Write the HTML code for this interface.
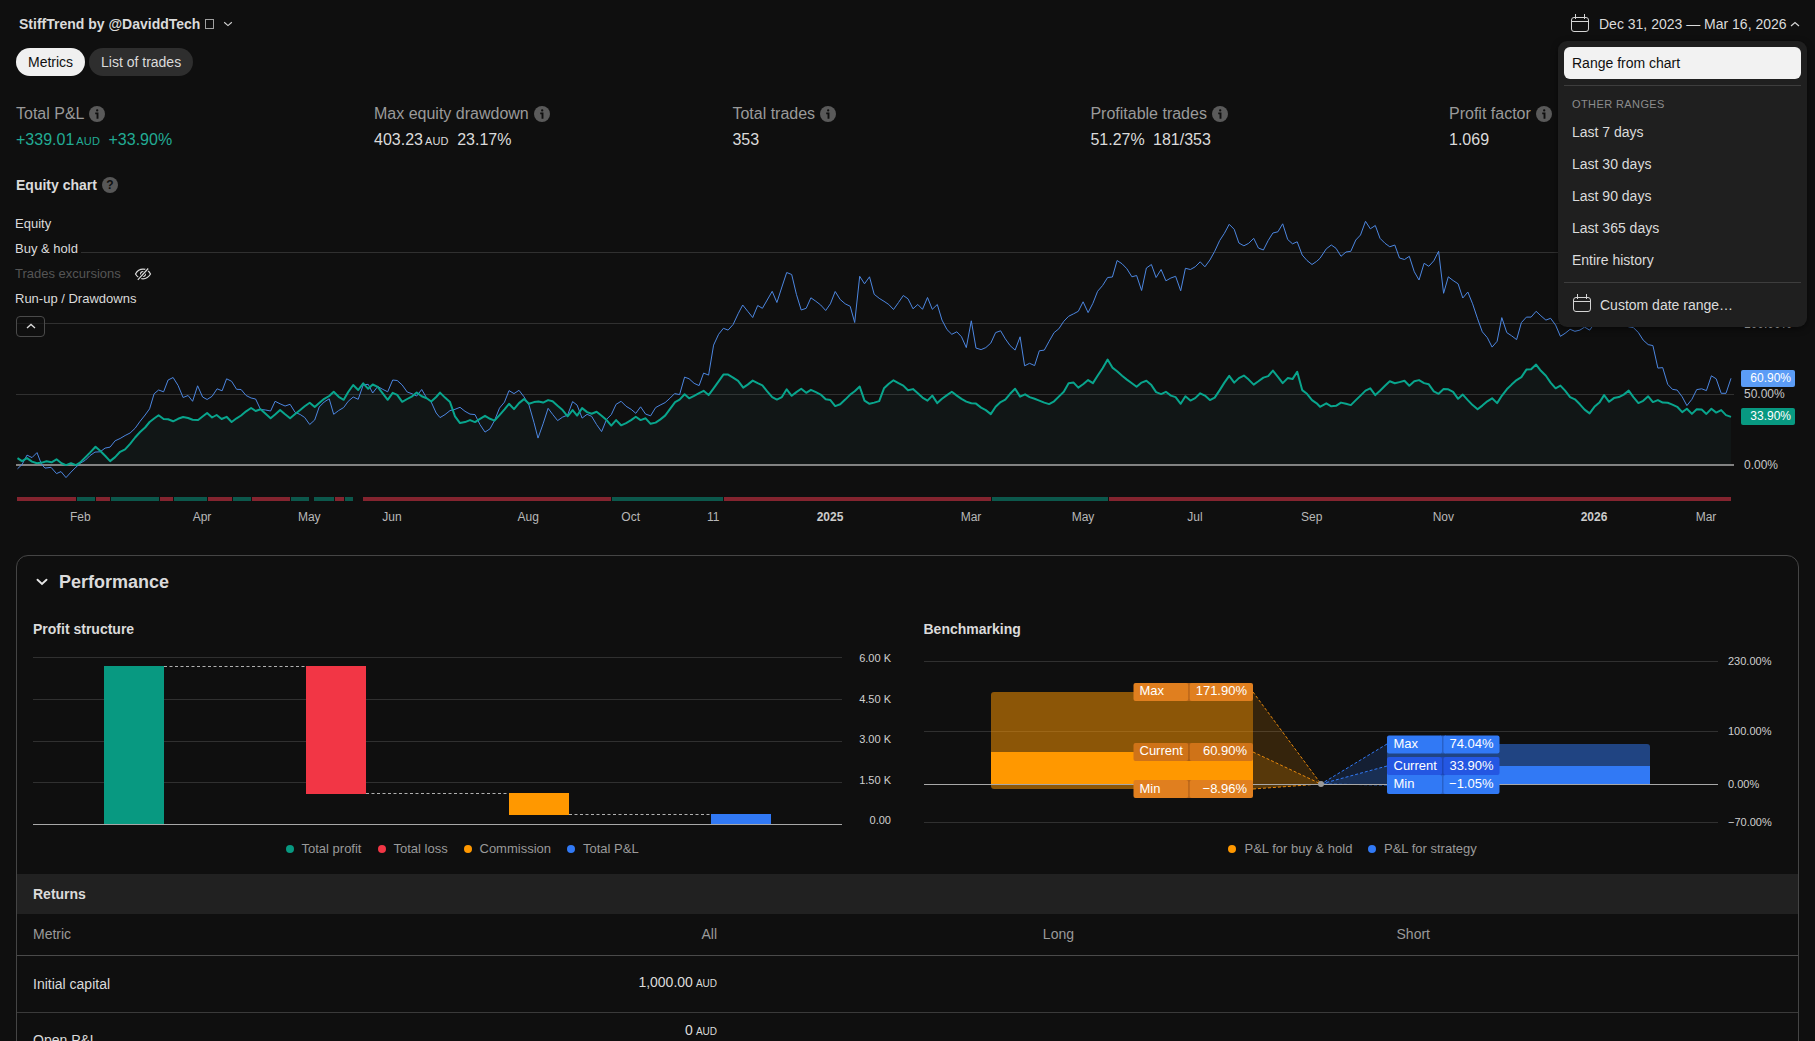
<!DOCTYPE html>
<html lang="en">
<head>
<meta charset="utf-8">
<title>Strategy report</title>
<style>
*{box-sizing:border-box;margin:0;padding:0}
html,body{width:1815px;height:1041px;overflow:hidden;background:#0f0f0f;color:#dbdbdb;font-family:"Liberation Sans",Arial,sans-serif;-webkit-font-smoothing:antialiased}
.abs{position:absolute}
#root{position:relative;width:1815px;height:1041px;overflow:hidden}
.title{left:19px;top:15px;font-size:14px;font-weight:700;color:#dbdbdb;line-height:18px;white-space:nowrap}
.tofu{display:inline-block;width:8.500px;height:10px;border:1px solid #a0a0a0;margin-left:4.900px;vertical-align:0}
.tab{top:48px;height:28px;border-radius:14px;font-size:14px;line-height:28px;padding:0 12px;white-space:nowrap}
.tab.on{left:16px;background:#f0f0f0;color:#0f0f0f}
.tab.off{left:89px;background:#2e2e2e;color:#dbdbdb}
.m{top:104px;white-space:nowrap}
.m .l{font-size:16px;line-height:20px;color:#9a9a9a;height:20px;display:flex;align-items:center}
.m .v{font-size:16px;line-height:20px;color:#dbdbdb;margin-top:6px}
.m .v small{font-size:11px;margin-left:2px;letter-spacing:.2px}
.m .v .g{margin-left:8.400px}
.green{color:#22ab94 !important}
.ic{display:block;width:16px;height:16px;margin-left:5px;flex:none}
.sect{font-size:14px;font-weight:700;color:#dbdbdb}
.lg{left:11px;font-size:13px;line-height:19px;padding:0 3.500px 0 4px;background:#0f0f0f;color:#dbdbdb;white-space:nowrap}
.dd{left:1558px;top:41px;width:249px;height:286px;background:#1f1f1f;border-radius:9px;box-shadow:0 2px 6px rgba(0,0,0,.5)}
.dd .sel{left:6px;top:6px;width:237px;height:32px;border-radius:6px;background:#f2f2f2;color:#0f0f0f;font-size:14px;line-height:32px;padding-left:8px}
.dd .sep{left:6px;width:237px;height:1px;background:#3d3d3d}
.dd .hd{left:14px;top:57px;font-size:11px;letter-spacing:.400px;color:#8c8c8c;line-height:13px}
.dd .it{left:14px;font-size:14px;line-height:18px;color:#dbdbdb;white-space:nowrap}
.panel{left:16px;top:555px;width:1783px;height:520px;border:1px solid #454545;border-radius:12px}
.ret{left:17px;top:874px;width:1781px;height:40px;background:#212121}
.hl{height:1px;background:#3a3a3a;left:17px;width:1781px}
.t14{font-size:14px;line-height:18px;white-space:nowrap}
svg text{font-family:"Liberation Sans",Arial,sans-serif}
</style>
</head>
<body>
<div id="root">

<!-- header -->
<div class="abs title">StiffTrend by @DaviddTech<span class="tofu"></span>
<svg width="10" height="6" viewBox="0 0 10 6" style="margin-left:5.200px;vertical-align:2px"><path d="M1.200 1.300l3.800 3.300l3.800-3.300" fill="none" stroke="#d4d4d4" stroke-width="1.150"/></svg></div>

<div class="abs tab on">Metrics</div>
<div class="abs tab off">List of trades</div>

<!-- header date -->
<svg class="abs" style="left:1570px;top:13px" width="20" height="20" viewBox="0 0 20 20"><rect x="1.500" y="4.500" width="17" height="14" rx="2.500" fill="none" stroke="#d4d4d4" stroke-width="1"/><path d="M1.500 8.500h17M5.500 1v5M14.500 1v5" stroke="#d4d4d4" stroke-width="1" fill="none"/></svg>
<div class="abs t14" style="left:1599px;top:15px;color:#dbdbdb">Dec 31, 2023 — Mar 16, 2026</div>
<svg class="abs" style="left:1790px;top:21px" width="10" height="6" viewBox="0 0 10 6"><path d="M1 5l4-3.500L9 5" fill="none" stroke="#d4d4d4" stroke-width="1.200"/></svg>

<!-- metrics -->
<div class="abs m" style="left:16px"><div class="l">Total P&amp;L<svg class="ic" viewBox="0 0 16 16"><circle cx="8" cy="8" r="8" fill="#5a5a5a"/><circle cx="8.200" cy="4.400" r="1.150" fill="#0f0f0f"/><path d="M6.200 7.400H8.500V12.800" fill="none" stroke="#0f0f0f" stroke-width="1.900"/></svg></div><div class="v green">+339.01<small>AUD</small><span class="g">+33.90%</span></div></div>
<div class="abs m" style="left:374px"><div class="l">Max equity drawdown<svg class="ic" viewBox="0 0 16 16"><circle cx="8" cy="8" r="8" fill="#5a5a5a"/><circle cx="8.200" cy="4.400" r="1.150" fill="#0f0f0f"/><path d="M6.200 7.400H8.500V12.800" fill="none" stroke="#0f0f0f" stroke-width="1.900"/></svg></div><div class="v">403.23<small>AUD</small><span class="g">23.17%</span></div></div>
<div class="abs m" style="left:732.400px"><div class="l">Total trades<svg class="ic" viewBox="0 0 16 16"><circle cx="8" cy="8" r="8" fill="#5a5a5a"/><circle cx="8.200" cy="4.400" r="1.150" fill="#0f0f0f"/><path d="M6.200 7.400H8.500V12.800" fill="none" stroke="#0f0f0f" stroke-width="1.900"/></svg></div><div class="v">353</div></div>
<div class="abs m" style="left:1090.400px"><div class="l">Profitable trades<svg class="ic" viewBox="0 0 16 16"><circle cx="8" cy="8" r="8" fill="#5a5a5a"/><circle cx="8.200" cy="4.400" r="1.150" fill="#0f0f0f"/><path d="M6.200 7.400H8.500V12.800" fill="none" stroke="#0f0f0f" stroke-width="1.900"/></svg></div><div class="v">51.27%<span class="g">181/353</span></div></div>
<div class="abs m" style="left:1449px"><div class="l">Profit factor<svg class="ic" viewBox="0 0 16 16"><circle cx="8" cy="8" r="8" fill="#5a5a5a"/><circle cx="8.200" cy="4.400" r="1.150" fill="#0f0f0f"/><path d="M6.200 7.400H8.500V12.800" fill="none" stroke="#0f0f0f" stroke-width="1.900"/></svg></div><div class="v">1.069</div></div>

<div class="abs sect" style="left:16px;top:176px;line-height:18px">Equity chart</div>
<div class="abs" style="left:102px;top:177px;width:16px;height:16px;border-radius:50%;background:#575757;color:#0f0f0f;font-size:12px;font-weight:700;line-height:16px;text-align:center">?</div>

<!-- equity chart -->
<svg class="abs" style="left:0;top:0" width="1815" height="545" viewBox="0 0 1815 545">
<g stroke="#303030" stroke-width="1">
<line x1="16" y1="252.5" x2="1734" y2="252.5"/>
<line x1="16" y1="323.5" x2="1734" y2="323.5"/>
<line x1="16" y1="394.5" x2="1734" y2="394.5"/>
</g>
<path d="M17.5,458.1 L22.0,461.1 L27.0,458.1 L32.0,461.6 L37.0,463.3 L42.0,462.6 L46.5,461.3 L51.5,462.3 L56.5,459.3 L61.5,463.3 L66.0,465.1 L71.0,463.3 L76.0,465.1 L80.0,462.6 L85.0,457.6 L90.0,452.6 L95.5,446.8 L100.1,450.8 L105.1,455.8 L110.1,461.1 L115.1,457.1 L120.1,451.8 L125.1,449.3 L130.1,443.8 L135.1,437.5 L140.1,432.0 L145.1,427.5 L149.6,422.0 L154.1,418.5 L158.6,415.3 L163.6,419.0 L168.1,419.3 L173.1,421.3 L178.1,418.8 L183.1,417.0 L188.1,418.0 L192.6,419.8 L198.1,420.0 L202.6,416.5 L207.1,413.0 L212.1,417.5 L216.6,415.0 L221.6,419.0 L226.6,416.8 L231.6,422.0 L236.6,418.3 L241.1,415.5 L246.1,411.3 L251.1,408.0 L255.6,411.0 L260.6,409.3 L265.6,413.8 L270.6,418.3 L275.1,414.5 L280.1,410.0 L285.1,414.3 L290.1,418.3 L295.1,414.0 L300.2,410.0 L304.7,406.3 L309.7,402.8 L314.7,407.0 L319.2,403.0 L324.2,398.8 L329.2,396.0 L333.7,391.8 L338.7,396.8 L343.7,399.8 L348.2,392.0 L353.2,385.0 L358.2,390.0 L363.2,383.3 L368.2,388.8 L372.7,384.5 L377.7,386.8 L382.7,393.3 L387.7,399.8 L392.7,392.8 L397.2,394.8 L402.2,401.8 L407.2,399.0 L412.2,396.3 L416.7,392.5 L421.7,396.3 L426.7,398.3 L431.2,401.5 L436.2,397.0 L440.0,392.6 L445.0,397.6 L450.0,402.1 L455.0,416.3 L460.0,423.1 L465.0,422.1 L470.0,420.1 L475.0,422.1 L480.0,418.8 L485.0,415.8 L490.0,418.8 L494.5,420.6 L499.5,415.1 L504.5,409.3 L509.0,403.8 L514.0,409.1 L519.0,403.1 L524.0,399.1 L529.0,403.8 L534.0,402.1 L538.5,401.6 L543.1,402.6 L548.1,400.1 L552.6,401.3 L557.6,405.8 L562.6,410.1 L567.6,416.3 L572.6,410.1 L577.1,415.6 L582.1,408.1 L587.1,412.1 L591.6,413.8 L596.6,411.8 L601.6,415.8 L606.6,420.1 L611.3,425.6 L616.1,420.1 L621.1,425.3 L626.1,423.1 L631.1,420.1 L635.8,416.8 L640.6,420.1 L645.6,418.3 L650.6,423.8 L655.6,422.6 L660.1,419.6 L665.1,415.6 L670.1,408.8 L675.1,402.1 L679.6,399.6 L684.6,394.3 L689.1,398.3 L694.1,395.8 L699.1,393.1 L703.6,390.8 L708.6,395.1 L713.6,388.3 L718.6,381.3 L723.4,374.6 L728.1,374.6 L733.1,377.6 L738.1,380.8 L743.2,387.6 L747.7,384.6 L752.7,380.6 L757.7,383.1 L762.4,385.3 L767.2,391.3 L772.2,397.1 L776.9,399.6 L781.9,397.1 L786.7,389.3 L791.7,395.8 L796.4,392.1 L801.2,388.8 L806.2,392.8 L810.9,389.8 L815.9,392.1 L820.7,394.6 L825.7,399.3 L830.4,400.1 L835.2,406.1 L840.2,404.3 L845.2,399.6 L850.2,394.6 L854.7,391.3 L859.7,386.6 L864.5,400.6 L869.5,403.8 L874.2,402.6 L879.2,401.1 L884.0,388.3 L888.8,383.8 L893.5,380.3 L898.5,383.1 L903.3,385.6 L908.0,390.3 L913.0,389.1 L917.8,393.3 L922.5,397.6 L927.5,400.6 L932.3,395.6 L937.3,403.1 L942.0,398.8 L947.0,395.1 L951.8,391.8 L956.8,395.6 L961.5,398.8 L966.3,401.6 L971.3,403.3 L976.0,403.6 L981.1,407.6 L985.8,410.1 L990.8,414.1 L995.6,406.8 L1000.6,402.1 L1005.3,399.6 L1010.1,393.8 L1015.1,388.8 L1020.1,396.6 L1025.1,394.3 L1029.6,397.1 L1034.6,398.8 L1039.3,400.6 L1044.3,402.6 L1049.1,404.1 L1054.1,401.3 L1058.8,396.6 L1063.8,391.8 L1068.6,383.3 L1073.6,382.6 L1078.3,387.6 L1083.1,384.3 L1088.1,380.1 L1092.9,383.1 L1097.6,375.8 L1102.6,368.3 L1107.6,359.6 L1112.4,367.6 L1117.1,371.3 L1122.1,375.8 L1126.9,379.6 L1131.9,383.3 L1136.6,386.8 L1141.6,382.6 L1146.4,380.8 L1151.4,385.1 L1156.1,392.1 L1161.1,394.1 L1165.9,391.8 L1170.9,395.6 L1175.6,397.1 L1180.7,403.8 L1185.4,396.3 L1190.4,400.6 L1195.2,398.1 L1200.2,393.3 L1204.9,395.6 L1209.9,400.1 L1214.7,397.6 L1219.7,390.1 L1224.4,382.6 L1229.2,375.8 L1234.2,382.6 L1238.9,378.1 L1243.9,375.6 L1248.7,379.6 L1253.7,384.6 L1258.4,381.3 L1263.4,377.6 L1268.2,376.1 L1272.9,370.6 L1277.9,376.8 L1282.7,383.1 L1287.7,378.1 L1292.5,379.1 L1297.2,371.8 L1302.2,390.1 L1307.0,393.8 L1312.0,400.1 L1316.7,403.3 L1320.0,406.8 L1326.3,403.3 L1331.3,406.3 L1336.0,405.8 L1341.0,402.6 L1346.0,403.8 L1350.8,405.1 L1355.8,400.1 L1360.5,395.6 L1365.5,390.6 L1370.3,388.3 L1375.3,395.1 L1380.0,390.8 L1385.0,385.8 L1389.8,381.3 L1394.8,383.3 L1399.5,382.1 L1404.5,380.8 L1409.3,385.8 L1414.3,381.3 L1419.0,380.1 L1424.1,383.1 L1428.8,384.3 L1433.8,391.3 L1438.6,393.8 L1443.6,389.1 L1448.3,389.3 L1453.1,391.8 L1458.1,398.8 L1462.8,394.6 L1467.8,400.1 L1472.6,405.1 L1477.6,409.3 L1482.3,405.6 L1487.3,401.3 L1492.1,398.3 L1497.1,403.1 L1501.8,395.8 L1506.8,389.3 L1511.6,384.6 L1516.6,380.1 L1521.4,377.1 L1526.4,369.6 L1531.1,369.3 L1536.1,364.6 L1540.9,370.8 L1545.9,375.8 L1550.6,382.6 L1555.6,388.3 L1560.4,385.6 L1565.1,390.6 L1570.1,397.1 L1574.9,399.3 L1579.9,404.3 L1584.6,409.6 L1589.6,413.4 L1594.4,406.8 L1599.4,402.6 L1604.1,395.1 L1609.1,401.8 L1613.9,398.1 L1618.9,397.1 L1623.7,394.6 L1628.7,390.6 L1633.4,397.1 L1638.4,403.1 L1643.2,400.8 L1648.2,396.3 L1652.9,402.1 L1657.9,400.1 L1662.7,402.6 L1667.7,402.8 L1672.4,404.6 L1677.2,406.8 L1682.2,412.1 L1686.9,408.8 L1691.9,413.9 L1696.7,409.3 L1701.7,409.6 L1706.4,413.9 L1711.4,408.8 L1716.2,412.6 L1721.2,410.1 L1726.0,415.1 L1731.0,416.9 L1731.0,465 L17.5,465 Z" fill="#38a0a0" fill-opacity="0.05"/>
<line x1="16" y1="465" x2="1734" y2="465" stroke="#a8a8a8" stroke-width="1.4"/>
<path d="M17.5,468.8 L22.0,464.6 L27.0,455.1 L32.0,457.6 L37.0,452.6 L41.5,464.3 L45.0,468.1 L51.0,467.3 L56.5,473.6 L61.0,471.6 L66.0,477.6 L71.0,472.1 L76.0,467.1 L80.5,463.1 L85.5,460.1 L90.0,455.6 L95.0,452.1 L100.1,451.8 L105.1,448.1 L110.1,447.1 L115.1,440.8 L120.1,438.5 L125.1,435.5 L130.1,433.0 L135.1,428.3 L140.1,421.3 L145.1,415.0 L149.6,408.8 L154.1,393.8 L158.6,390.0 L163.6,391.8 L168.1,380.0 L173.1,377.5 L178.1,385.5 L183.1,397.5 L188.1,395.5 L192.6,401.3 L197.6,385.8 L202.6,397.0 L207.1,399.5 L212.1,396.3 L217.1,388.8 L222.1,390.8 L226.6,378.8 L231.6,381.3 L236.6,389.3 L241.1,389.5 L246.1,395.5 L251.1,398.0 L255.6,399.0 L260.6,409.5 L265.6,410.0 L270.6,411.0 L275.1,401.3 L280.1,403.8 L285.1,406.0 L290.1,404.3 L295.1,412.3 L300.2,414.5 L304.7,417.5 L309.7,424.5 L314.7,420.0 L319.2,407.0 L324.2,402.0 L329.2,398.8 L333.7,414.3 L338.7,410.5 L343.7,407.5 L348.2,401.3 L353.2,397.0 L358.2,399.3 L363.2,385.0 L368.2,384.3 L372.7,393.0 L377.7,386.5 L382.7,389.3 L387.7,391.8 L392.7,380.0 L397.2,380.5 L402.2,385.0 L407.2,392.0 L412.2,393.8 L416.7,396.0 L421.7,389.5 L426.7,398.0 L431.2,402.0 L436.2,413.0 L440.0,417.6 L445.0,414.6 L450.0,410.6 L455.0,409.3 L460.0,407.3 L465.0,411.3 L470.0,414.1 L475.0,414.6 L480.0,424.6 L485.0,432.1 L490.0,428.8 L494.5,420.6 L499.5,408.1 L504.5,402.1 L509.0,390.6 L514.0,393.6 L519.0,390.3 L524.0,396.8 L529.0,405.1 L534.0,422.6 L538.0,438.1 L543.1,423.8 L548.1,408.3 L552.6,414.3 L557.6,420.6 L562.6,417.1 L567.6,415.1 L572.6,401.6 L577.1,405.1 L582.1,418.1 L587.1,414.3 L591.6,416.3 L596.6,424.6 L601.6,431.6 L606.6,419.3 L611.3,414.6 L616.1,404.3 L621.1,401.3 L626.1,406.3 L631.1,409.3 L635.8,413.3 L640.6,406.8 L645.6,414.1 L650.6,415.8 L655.6,407.6 L660.1,405.1 L665.1,402.6 L670.1,398.1 L674.6,393.6 L679.6,394.6 L684.6,377.1 L689.1,378.8 L694.1,383.3 L699.1,385.6 L703.6,373.1 L708.6,375.1 L713.6,345.1 L718.6,334.3 L723.4,328.3 L728.1,330.1 L733.1,324.5 L738.1,313.8 L742.7,305.0 L747.7,311.3 L752.7,317.5 L757.7,305.5 L762.4,308.3 L767.2,300.0 L772.2,291.3 L776.9,302.5 L781.9,287.0 L786.7,272.5 L791.7,274.5 L796.4,294.3 L801.2,310.0 L806.2,308.3 L810.9,297.8 L815.9,301.3 L820.7,305.0 L825.7,310.5 L830.4,303.8 L835.2,291.5 L840.2,299.5 L845.2,303.8 L850.2,306.3 L854.7,322.5 L859.7,276.3 L864.5,283.8 L869.5,276.8 L874.2,294.3 L879.2,298.3 L884.0,301.3 L888.8,304.5 L893.5,309.5 L898.5,302.5 L903.3,295.5 L908.0,298.8 L913.0,308.8 L917.8,304.5 L922.5,309.3 L927.5,297.5 L932.3,309.3 L937.3,304.5 L942.0,320.1 L947.0,329.6 L951.8,334.3 L956.8,331.8 L961.5,336.8 L966.3,347.6 L971.3,320.8 L976.0,348.1 L981.1,349.6 L985.8,347.6 L990.8,343.1 L995.6,332.6 L1000.6,330.8 L1005.3,338.8 L1010.1,345.6 L1015.1,350.1 L1020.1,336.8 L1024.6,365.8 L1029.6,363.3 L1034.6,365.6 L1039.3,350.8 L1044.3,350.1 L1049.1,341.3 L1054.1,332.6 L1058.8,328.8 L1063.8,321.3 L1068.6,316.3 L1073.6,313.8 L1078.3,311.3 L1083.1,301.8 L1088.1,312.6 L1092.9,303.3 L1097.6,291.3 L1102.6,285.5 L1107.6,277.5 L1112.4,277.0 L1117.1,260.5 L1122.1,263.8 L1126.9,268.8 L1131.9,276.8 L1136.6,275.5 L1141.6,290.5 L1146.4,268.0 L1151.4,264.5 L1156.1,277.5 L1161.1,269.5 L1165.9,280.8 L1170.9,278.0 L1175.6,276.3 L1180.7,290.8 L1185.4,268.3 L1190.4,269.5 L1195.2,266.8 L1200.2,261.8 L1204.9,266.8 L1209.9,260.0 L1214.7,251.3 L1219.7,240.5 L1224.4,233.3 L1229.2,224.3 L1234.2,229.3 L1238.9,243.0 L1243.9,245.8 L1248.7,243.3 L1253.7,238.3 L1258.4,248.0 L1263.4,250.0 L1268.2,240.5 L1272.9,233.0 L1277.9,231.8 L1282.7,223.8 L1287.7,239.5 L1292.5,243.8 L1297.2,241.8 L1302.2,255.0 L1307.0,260.5 L1312.0,264.5 L1316.7,261.3 L1320.0,258.3 L1326.3,248.8 L1331.3,245.0 L1336.0,248.3 L1341.0,256.3 L1346.0,252.0 L1350.8,251.3 L1355.8,240.0 L1360.5,235.0 L1365.5,221.3 L1370.3,228.8 L1375.3,225.5 L1380.0,238.3 L1385.0,243.3 L1389.8,246.8 L1394.8,245.0 L1399.5,258.0 L1404.5,259.5 L1409.3,256.3 L1414.3,271.8 L1419.0,280.0 L1424.1,263.3 L1428.8,266.3 L1433.8,260.8 L1438.6,251.3 L1443.6,293.3 L1448.3,276.8 L1453.1,280.5 L1458.1,283.8 L1462.8,298.0 L1467.8,292.0 L1472.6,303.8 L1477.6,318.8 L1482.3,331.8 L1487.3,337.6 L1492.1,347.1 L1497.1,341.3 L1501.8,317.6 L1506.8,332.6 L1511.6,335.8 L1516.6,339.6 L1521.4,322.6 L1526.4,317.1 L1531.1,317.1 L1536.1,311.3 L1540.9,315.8 L1545.9,320.1 L1550.6,318.3 L1555.6,325.1 L1560.4,336.3 L1565.1,333.3 L1570.1,329.3 L1574.9,331.3 L1579.9,330.1 L1584.6,327.1 L1589.6,330.1 L1594.4,323.8 L1599.4,320.1 L1604.1,321.3 L1609.1,320.1 L1613.9,322.6 L1618.9,320.1 L1623.7,323.8 L1628.7,326.8 L1633.4,327.6 L1638.4,332.6 L1643.2,340.1 L1648.2,344.6 L1652.9,345.6 L1657.9,368.1 L1662.7,367.6 L1667.7,384.3 L1672.4,389.3 L1677.2,390.1 L1682.2,396.8 L1686.9,405.6 L1691.9,399.3 L1696.7,389.6 L1701.7,388.8 L1706.4,390.6 L1711.4,375.8 L1716.2,378.8 L1721.2,393.3 L1726.0,393.3 L1731.0,378.3" fill="none" stroke="#4c86e0" stroke-width="1" stroke-linejoin="round"/>
<path d="M17.5,458.1 L22.0,461.1 L27.0,458.1 L32.0,461.6 L37.0,463.3 L42.0,462.6 L46.5,461.3 L51.5,462.3 L56.5,459.3 L61.5,463.3 L66.0,465.1 L71.0,463.3 L76.0,465.1 L80.0,462.6 L85.0,457.6 L90.0,452.6 L95.5,446.8 L100.1,450.8 L105.1,455.8 L110.1,461.1 L115.1,457.1 L120.1,451.8 L125.1,449.3 L130.1,443.8 L135.1,437.5 L140.1,432.0 L145.1,427.5 L149.6,422.0 L154.1,418.5 L158.6,415.3 L163.6,419.0 L168.1,419.3 L173.1,421.3 L178.1,418.8 L183.1,417.0 L188.1,418.0 L192.6,419.8 L198.1,420.0 L202.6,416.5 L207.1,413.0 L212.1,417.5 L216.6,415.0 L221.6,419.0 L226.6,416.8 L231.6,422.0 L236.6,418.3 L241.1,415.5 L246.1,411.3 L251.1,408.0 L255.6,411.0 L260.6,409.3 L265.6,413.8 L270.6,418.3 L275.1,414.5 L280.1,410.0 L285.1,414.3 L290.1,418.3 L295.1,414.0 L300.2,410.0 L304.7,406.3 L309.7,402.8 L314.7,407.0 L319.2,403.0 L324.2,398.8 L329.2,396.0 L333.7,391.8 L338.7,396.8 L343.7,399.8 L348.2,392.0 L353.2,385.0 L358.2,390.0 L363.2,383.3 L368.2,388.8 L372.7,384.5 L377.7,386.8 L382.7,393.3 L387.7,399.8 L392.7,392.8 L397.2,394.8 L402.2,401.8 L407.2,399.0 L412.2,396.3 L416.7,392.5 L421.7,396.3 L426.7,398.3 L431.2,401.5 L436.2,397.0 L440.0,392.6 L445.0,397.6 L450.0,402.1 L455.0,416.3 L460.0,423.1 L465.0,422.1 L470.0,420.1 L475.0,422.1 L480.0,418.8 L485.0,415.8 L490.0,418.8 L494.5,420.6 L499.5,415.1 L504.5,409.3 L509.0,403.8 L514.0,409.1 L519.0,403.1 L524.0,399.1 L529.0,403.8 L534.0,402.1 L538.5,401.6 L543.1,402.6 L548.1,400.1 L552.6,401.3 L557.6,405.8 L562.6,410.1 L567.6,416.3 L572.6,410.1 L577.1,415.6 L582.1,408.1 L587.1,412.1 L591.6,413.8 L596.6,411.8 L601.6,415.8 L606.6,420.1 L611.3,425.6 L616.1,420.1 L621.1,425.3 L626.1,423.1 L631.1,420.1 L635.8,416.8 L640.6,420.1 L645.6,418.3 L650.6,423.8 L655.6,422.6 L660.1,419.6 L665.1,415.6 L670.1,408.8 L675.1,402.1 L679.6,399.6 L684.6,394.3 L689.1,398.3 L694.1,395.8 L699.1,393.1 L703.6,390.8 L708.6,395.1 L713.6,388.3 L718.6,381.3 L723.4,374.6 L728.1,374.6 L733.1,377.6 L738.1,380.8 L743.2,387.6 L747.7,384.6 L752.7,380.6 L757.7,383.1 L762.4,385.3 L767.2,391.3 L772.2,397.1 L776.9,399.6 L781.9,397.1 L786.7,389.3 L791.7,395.8 L796.4,392.1 L801.2,388.8 L806.2,392.8 L810.9,389.8 L815.9,392.1 L820.7,394.6 L825.7,399.3 L830.4,400.1 L835.2,406.1 L840.2,404.3 L845.2,399.6 L850.2,394.6 L854.7,391.3 L859.7,386.6 L864.5,400.6 L869.5,403.8 L874.2,402.6 L879.2,401.1 L884.0,388.3 L888.8,383.8 L893.5,380.3 L898.5,383.1 L903.3,385.6 L908.0,390.3 L913.0,389.1 L917.8,393.3 L922.5,397.6 L927.5,400.6 L932.3,395.6 L937.3,403.1 L942.0,398.8 L947.0,395.1 L951.8,391.8 L956.8,395.6 L961.5,398.8 L966.3,401.6 L971.3,403.3 L976.0,403.6 L981.1,407.6 L985.8,410.1 L990.8,414.1 L995.6,406.8 L1000.6,402.1 L1005.3,399.6 L1010.1,393.8 L1015.1,388.8 L1020.1,396.6 L1025.1,394.3 L1029.6,397.1 L1034.6,398.8 L1039.3,400.6 L1044.3,402.6 L1049.1,404.1 L1054.1,401.3 L1058.8,396.6 L1063.8,391.8 L1068.6,383.3 L1073.6,382.6 L1078.3,387.6 L1083.1,384.3 L1088.1,380.1 L1092.9,383.1 L1097.6,375.8 L1102.6,368.3 L1107.6,359.6 L1112.4,367.6 L1117.1,371.3 L1122.1,375.8 L1126.9,379.6 L1131.9,383.3 L1136.6,386.8 L1141.6,382.6 L1146.4,380.8 L1151.4,385.1 L1156.1,392.1 L1161.1,394.1 L1165.9,391.8 L1170.9,395.6 L1175.6,397.1 L1180.7,403.8 L1185.4,396.3 L1190.4,400.6 L1195.2,398.1 L1200.2,393.3 L1204.9,395.6 L1209.9,400.1 L1214.7,397.6 L1219.7,390.1 L1224.4,382.6 L1229.2,375.8 L1234.2,382.6 L1238.9,378.1 L1243.9,375.6 L1248.7,379.6 L1253.7,384.6 L1258.4,381.3 L1263.4,377.6 L1268.2,376.1 L1272.9,370.6 L1277.9,376.8 L1282.7,383.1 L1287.7,378.1 L1292.5,379.1 L1297.2,371.8 L1302.2,390.1 L1307.0,393.8 L1312.0,400.1 L1316.7,403.3 L1320.0,406.8 L1326.3,403.3 L1331.3,406.3 L1336.0,405.8 L1341.0,402.6 L1346.0,403.8 L1350.8,405.1 L1355.8,400.1 L1360.5,395.6 L1365.5,390.6 L1370.3,388.3 L1375.3,395.1 L1380.0,390.8 L1385.0,385.8 L1389.8,381.3 L1394.8,383.3 L1399.5,382.1 L1404.5,380.8 L1409.3,385.8 L1414.3,381.3 L1419.0,380.1 L1424.1,383.1 L1428.8,384.3 L1433.8,391.3 L1438.6,393.8 L1443.6,389.1 L1448.3,389.3 L1453.1,391.8 L1458.1,398.8 L1462.8,394.6 L1467.8,400.1 L1472.6,405.1 L1477.6,409.3 L1482.3,405.6 L1487.3,401.3 L1492.1,398.3 L1497.1,403.1 L1501.8,395.8 L1506.8,389.3 L1511.6,384.6 L1516.6,380.1 L1521.4,377.1 L1526.4,369.6 L1531.1,369.3 L1536.1,364.6 L1540.9,370.8 L1545.9,375.8 L1550.6,382.6 L1555.6,388.3 L1560.4,385.6 L1565.1,390.6 L1570.1,397.1 L1574.9,399.3 L1579.9,404.3 L1584.6,409.6 L1589.6,413.4 L1594.4,406.8 L1599.4,402.6 L1604.1,395.1 L1609.1,401.8 L1613.9,398.1 L1618.9,397.1 L1623.7,394.6 L1628.7,390.6 L1633.4,397.1 L1638.4,403.1 L1643.2,400.8 L1648.2,396.3 L1652.9,402.1 L1657.9,400.1 L1662.7,402.6 L1667.7,402.8 L1672.4,404.6 L1677.2,406.8 L1682.2,412.1 L1686.9,408.8 L1691.9,413.9 L1696.7,409.3 L1701.7,409.6 L1706.4,413.9 L1711.4,408.8 L1716.2,412.6 L1721.2,410.1 L1726.0,415.1 L1731.0,416.9" fill="none" stroke="#09a58d" stroke-width="2" stroke-linejoin="round"/>
<rect x="17" y="497" width="59" height="4" fill="#84242f"/><rect x="77" y="497" width="18" height="4" fill="#0c584c"/><rect x="96" y="497" width="14" height="4" fill="#84242f"/><rect x="111" y="497" width="48" height="4" fill="#0c584c"/><rect x="160" y="497" width="13" height="4" fill="#84242f"/><rect x="174" y="497" width="33" height="4" fill="#0c584c"/><rect x="208" y="497" width="24" height="4" fill="#84242f"/><rect x="233" y="497" width="18" height="4" fill="#0c584c"/><rect x="252" y="497" width="38" height="4" fill="#84242f"/><rect x="291" y="497" width="18" height="4" fill="#0c584c"/><rect x="314" y="497" width="20" height="4" fill="#0c584c"/><rect x="335" y="497" width="9" height="4" fill="#84242f"/><rect x="345" y="497" width="8" height="4" fill="#0c584c"/><rect x="363" y="497" width="248" height="4" fill="#84242f"/><rect x="612" y="497" width="111" height="4" fill="#0c584c"/><rect x="724" y="497" width="267" height="4" fill="#84242f"/><rect x="992" y="497" width="116" height="4" fill="#0c584c"/><rect x="1109" y="497" width="622" height="4" fill="#84242f"/>
<text x="80.3" y="521" text-anchor="middle" font-size="12" fill="#b8b8b8" >Feb</text><text x="202" y="521" text-anchor="middle" font-size="12" fill="#b8b8b8" >Apr</text><text x="309.3" y="521" text-anchor="middle" font-size="12" fill="#b8b8b8" >May</text><text x="392" y="521" text-anchor="middle" font-size="12" fill="#b8b8b8" >Jun</text><text x="528.3" y="521" text-anchor="middle" font-size="12" fill="#b8b8b8" >Aug</text><text x="630.7" y="521" text-anchor="middle" font-size="12" fill="#b8b8b8" >Oct</text><text x="713.3" y="521" text-anchor="middle" font-size="12" fill="#b8b8b8" >11</text><text x="830" y="521" text-anchor="middle" font-size="12" fill="#cccccc" font-weight="700">2025</text><text x="971" y="521" text-anchor="middle" font-size="12" fill="#b8b8b8" >Mar</text><text x="1083" y="521" text-anchor="middle" font-size="12" fill="#b8b8b8" >May</text><text x="1195" y="521" text-anchor="middle" font-size="12" fill="#b8b8b8" >Jul</text><text x="1311.7" y="521" text-anchor="middle" font-size="12" fill="#b8b8b8" >Sep</text><text x="1443.3" y="521" text-anchor="middle" font-size="12" fill="#b8b8b8" >Nov</text><text x="1594" y="521" text-anchor="middle" font-size="12" fill="#cccccc" font-weight="700">2026</text><text x="1706" y="521" text-anchor="middle" font-size="12" fill="#b8b8b8" >Mar</text>
<g font-size="12" fill="#c8c8c8">
<text x="1744" y="327.800">100.00%</text>
<text x="1744" y="398">50.00%</text>
<text x="1744" y="469">0.00%</text>
</g>
<rect x="1741" y="370" width="54" height="17" rx="2" fill="#5b9cf6"/>
<text x="1791" y="382" font-size="12" fill="#fff" text-anchor="end">60.90%</text>
<rect x="1741" y="408" width="54" height="17" rx="2" fill="#089981"/>
<text x="1791" y="420" font-size="12" fill="#fff" text-anchor="end">33.90%</text>
</svg>

<!-- chart legend -->
<div class="abs lg" style="top:214px">Equity</div>
<div class="abs lg" style="top:239px">Buy &amp; hold</div>
<div class="abs lg" style="top:264px;color:#555;width:146px">Trades excursions</div>
<svg class="abs" style="left:134px;top:265px" width="18" height="18" viewBox="0 0 18 18"><path d="M1.5 9C3.3 5.8 6 4.2 9 4.2S14.700 5.800 16.500 9C14.700 12.200 12 13.800 9 13.800S3.300 12.200 1.500 9Z" fill="none" stroke="#dbdbdb" stroke-width="1.2"/><circle cx="9" cy="9" r="2.400" fill="none" stroke="#dbdbdb" stroke-width="1.2"/><path d="M3.800 14.800L14.200 3.500" stroke="#0f0f0f" stroke-width="3.200"/><path d="M3.800 14.800L14.200 3.500" stroke="#dbdbdb" stroke-width="1.200"/></svg>
<div class="abs lg" style="top:289px">Run-up / Drawdowns</div>

<div class="abs" style="left:16px;top:316px;width:29px;height:21px;border:1px solid #4a4a4a;border-radius:4px;background:rgba(15,15,15,.6)"></div>
<svg class="abs" style="left:25.600px;top:323.400px" width="10" height="6" viewBox="0 0 10 6"><path d="M1 5l4-3.600L9 5" fill="none" stroke="#dbdbdb" stroke-width="1.300"/></svg>

<!-- performance panel -->
<div class="abs panel"></div>
<svg class="abs" style="left:36px;top:578px" width="12" height="8" viewBox="0 0 12 8"><path d="M1.500 1.700L6 5.900l4.500-4.200" fill="none" stroke="#e6e6e6" stroke-width="1.900" stroke-linecap="round"/></svg>
<div class="abs" style="left:59px;top:571px;font-size:18px;font-weight:700;line-height:22px;color:#dbdbdb">Performance</div>
<div class="abs sect" style="left:33px;top:620px;line-height:18px">Profit structure</div>
<div class="abs sect" style="left:923.500px;top:620px;line-height:18px">Benchmarking</div>

<svg class="abs" style="left:0;top:640px" width="1815" height="225" viewBox="0 640 1815 225">
<!-- profit structure -->
<g stroke="#303030" stroke-width="1">
<line x1="33" y1="657.500" x2="842" y2="657.500"/>
<line x1="33" y1="699.500" x2="842" y2="699.500"/>
<line x1="33" y1="741.500" x2="842" y2="741.500"/>
<line x1="33" y1="782.500" x2="842" y2="782.500"/>
</g>
<line x1="33" y1="824.500" x2="842" y2="824.500" stroke="#a8a8a8" stroke-width="1.200"/>
<rect x="104" y="666" width="60" height="158" fill="#089981"/>
<rect x="306" y="666" width="60" height="128" fill="#f23645"/>
<rect x="509" y="793" width="60" height="22" fill="#ff9800"/>
<rect x="711" y="814" width="60" height="10" fill="#3179f5"/>
<g stroke="#b0b0b0" stroke-width="1" stroke-dasharray="3 2.500">
<line x1="164" y1="666.500" x2="306" y2="666.500"/>
<line x1="366" y1="793.500" x2="509" y2="793.500"/>
<line x1="569" y1="814.500" x2="711" y2="814.500"/>
</g>
<g font-size="11" fill="#d0d0d0" text-anchor="end">
<text x="891" y="662">6.00 K</text>
<text x="891" y="703">4.50 K</text>
<text x="891" y="743">3.00 K</text>
<text x="891" y="784">1.50 K</text>
<text x="891" y="824">0.00</text>
</g>
<g font-size="13" fill="#9a9a9a">
<circle cx="290" cy="849" r="4" fill="#089981"/><text x="301.500" y="853">Total profit</text>
<circle cx="382" cy="849" r="4" fill="#f23645"/><text x="393.500" y="853">Total loss</text>
<circle cx="468" cy="849" r="4" fill="#ff9800"/><text x="479.500" y="853">Commission</text>
<circle cx="571" cy="849" r="4" fill="#3179f5"/><text x="583" y="853">Total P&amp;L</text>
</g>

<!-- benchmarking -->
<g stroke="#303030" stroke-width="1">
<line x1="924" y1="661.500" x2="1718" y2="661.500"/>
<line x1="924" y1="731.500" x2="1718" y2="731.500"/>
<line x1="924" y1="822.500" x2="1718" y2="822.500"/>
</g>
<rect x="991" y="692" width="262" height="97" rx="3" fill="#ff9800" fill-opacity="0.520"/>
<rect x="991" y="752" width="262" height="32.500" fill="#ff9800"/>
<path d="M1253 692L1321 784L1253 752Z" fill="#ff9800" fill-opacity="0.160"/>
<path d="M1253 752L1321 784L1253 789Z" fill="#ff9800" fill-opacity="0.300"/>
<g stroke="#e8890c" stroke-width="1" stroke-dasharray="3 2" fill="none">
<path d="M1253 692L1321 784M1253 752L1321 784M1253 789L1321 784"/>
</g>
<path d="M1387 744L1321 784L1387 766Z" fill="#3179f5" fill-opacity="0.160"/>
<path d="M1387 766L1321 784L1387 785Z" fill="#3179f5" fill-opacity="0.300"/>
<g stroke="#3179f5" stroke-width="1" stroke-dasharray="3 2" fill="none">
<path d="M1387 744L1321 784M1387 766L1321 784M1387 785L1321 784"/>
</g>
<rect x="1387" y="744" width="263" height="40.500" rx="3" fill="#3179f5" fill-opacity="0.500"/>
<rect x="1387" y="766" width="263" height="18.500" fill="#3179f5"/>
<line x1="924" y1="784.500" x2="1718" y2="784.500" stroke="#a8a8a8" stroke-width="1.200"/>
<circle cx="1321" cy="784" r="3" fill="#9a9a9a"/>
<g font-size="13" fill="#fff">
<rect x="1186" y="683" width="6" height="18" fill="#b9661a"/><rect x="1133.500" y="683" width="54.700" height="18" rx="2" fill="#e07f1f"/><rect x="1189.700" y="683" width="63.300" height="18" rx="2" fill="#e07f1f"/>
<text x="1139.500" y="695">Max</text><text x="1247" y="695" text-anchor="end">171.90%</text>
<rect x="1186" y="743" width="6" height="18" fill="#a85c14"/><rect x="1133.500" y="743" width="54.700" height="18" rx="2" fill="#cf7318"/><rect x="1189.700" y="743" width="63.300" height="18" rx="2" fill="#cf7318"/>
<text x="1139.500" y="755">Current</text><text x="1247" y="755" text-anchor="end">60.90%</text>
<rect x="1186" y="780" width="6" height="18" fill="#b9661a"/><rect x="1133.500" y="780" width="54.700" height="18" rx="2" fill="#e07f1f"/><rect x="1189.700" y="780" width="63.300" height="18" rx="2" fill="#e07f1f"/>
<text x="1139.500" y="792.500">Min</text><text x="1247" y="792.500" text-anchor="end">−8.96%</text>

<rect x="1440" y="735.500" width="6" height="18" fill="#2861c8"/><rect x="1387" y="735.500" width="55" height="18" rx="2" fill="#3179f5"/><rect x="1443.500" y="735.500" width="56" height="18" rx="2" fill="#3179f5"/>
<text x="1393.500" y="747.500">Max</text><text x="1493.500" y="747.500" text-anchor="end">74.04%</text>
<rect x="1440" y="757" width="6" height="18" fill="#1d47b8"/><rect x="1387" y="757" width="55" height="18" rx="2" fill="#2457e2"/><rect x="1443.500" y="757" width="56" height="18" rx="2" fill="#2457e2"/>
<text x="1393.500" y="769.500">Current</text><text x="1493.500" y="769.500" text-anchor="end">33.90%</text>
<rect x="1440" y="775" width="6" height="19" fill="#2861c8"/><rect x="1387" y="775" width="55" height="19" rx="2" fill="#3179f5"/><rect x="1443.500" y="775" width="56" height="19" rx="2" fill="#3179f5"/>
<text x="1393.500" y="787.500">Min</text><text x="1493.500" y="787.500" text-anchor="end">−1.05%</text>
</g>
<g font-size="11" fill="#d0d0d0">
<text x="1728" y="665">230.00%</text>
<text x="1728" y="735">100.00%</text>
<text x="1728" y="788">0.00%</text>
<text x="1728" y="826">−70.00%</text>
</g>
<g font-size="13" fill="#9a9a9a">
<circle cx="1232" cy="849" r="4" fill="#ff9800"/><text x="1244.500" y="853">P&amp;L for buy &amp; hold</text>
<circle cx="1372" cy="849" r="4" fill="#3179f5"/><text x="1384" y="853">P&amp;L for strategy</text>
</g>
</svg>

<!-- returns table -->
<div class="abs ret"></div>
<div class="abs sect" style="left:33px;top:885px;line-height:18px">Returns</div>
<div class="abs t14" style="left:33px;top:925px;color:#9a9a9a">Metric</div>
<div class="abs t14" style="left:617px;top:925px;width:100px;text-align:right;color:#9a9a9a">All</div>
<div class="abs t14" style="left:974px;top:925px;width:100px;text-align:right;color:#9a9a9a">Long</div>
<div class="abs t14" style="left:1330px;top:925px;width:100px;text-align:right;color:#9a9a9a">Short</div>
<div class="abs hl" style="top:955px;background:#4a4a4a"></div>
<div class="abs t14" style="left:33px;top:975px;color:#dbdbdb">Initial capital</div>
<div class="abs t14" style="left:517px;top:973px;width:200px;text-align:right;color:#dbdbdb">1,000.00<span style="font-size:10px;margin-left:3px">AUD</span></div>
<div class="abs hl" style="top:1012px"></div>
<div class="abs t14" style="left:33px;top:1031px;color:#dbdbdb">Open P&amp;L</div>
<div class="abs t14" style="left:517px;top:1021px;width:200px;text-align:right;color:#dbdbdb">0<span style="font-size:10px;margin-left:3px">AUD</span></div>

<!-- dropdown -->
<div class="abs dd">
<div class="abs sel">Range from chart</div>
<div class="abs sep" style="top:44px"></div>
<div class="abs hd">OTHER RANGES</div>
<div class="abs it" style="top:82px">Last 7 days</div>
<div class="abs it" style="top:114px">Last 30 days</div>
<div class="abs it" style="top:146px">Last 90 days</div>
<div class="abs it" style="top:178px">Last 365 days</div>
<div class="abs it" style="top:210px">Entire history</div>
<div class="abs sep" style="top:241px"></div>
<svg class="abs" style="left:14px;top:252px" width="20" height="20" viewBox="0 0 20 20"><rect x="1.500" y="4.500" width="17" height="14" rx="2.500" fill="none" stroke="#d4d4d4" stroke-width="1"/><path d="M1.500 8.500h17M5.500 1v5M14.500 1v5" stroke="#d4d4d4" stroke-width="1" fill="none"/></svg>
<div class="abs it" style="left:42px;top:255px">Custom date range…</div>
</div>

</div>
</body>
</html>
